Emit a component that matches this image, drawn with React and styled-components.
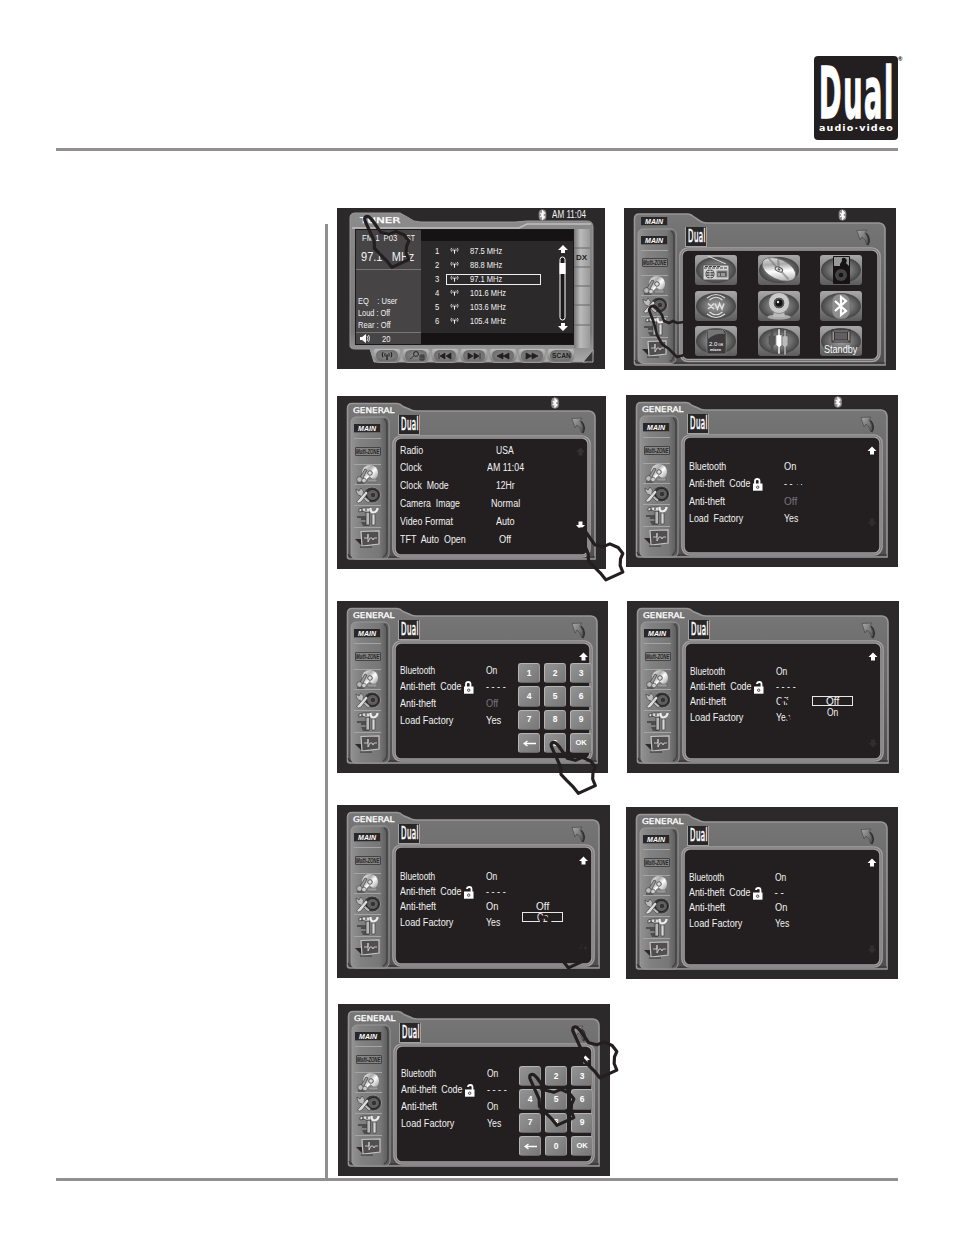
import React, { useLayoutEffect, useRef, useState } from "react";
import styled, { createGlobalStyle } from "styled-components";

const ink = "#231f20";
const rule = "#918f90";

const Global = createGlobalStyle`
  body { margin: 0; background: #fff; font-family: "Liberation Sans", Arial, sans-serif; }
  svg { display: block; }
`;

const Page = styled.div`
  width: 954px; height: 1235px; box-sizing: border-box;
  padding: 56px 0 0 56px; overflow: hidden; position: relative;
`;
const Header = styled.header`
  width: 847px; height: 92px; display: flex; justify-content: flex-end; align-items: flex-start;
`;
const Logo = styled.div`
  width: 84px; height: 84px; border-radius: 4px; background: ${ink}; color: #fff;
  display: flex; flex-direction: column; box-sizing: border-box; padding: 9px 0 0 5px;
`;
const LogoWord = styled.div`
  height: 59px; font: bold 72px/56px "DejaVu Sans Condensed", "DejaVu Sans", sans-serif; letter-spacing: 4px;
  -webkit-text-stroke: 1.5px #fff;
`;
const LogoSub = styled.div`
  font: bold 8.5px/9px "DejaVu Sans", sans-serif; letter-spacing: 1px;
`;
const Reg = styled.span`font: bold 6px/6px "Liberation Sans", sans-serif; width: 5px;`;
const Rule = styled.div`width: 842px; height: 3px; background: ${rule};`;
const Columns = styled.main`
  display: flex; height: 1027px; align-items: flex-start;
`;
const Margin = styled.aside`
  width: 269px; height: 954px; margin-top: 73px; border-right: 3px solid ${rule};
`;
const Stack = styled.div`
  width: 287px; padding: 57px 0 0 ${(p) => p.$pad || 0}px; flex: none; box-sizing: border-box;
`;
const Display = styled.section`
  position: relative; width: ${(p) => p.$w}px; height: ${(p) => p.$h}px;
  margin: ${(p) => p.$mt || 0}px 0 0 ${(p) => p.$ml || 0}px;
  background: #2c292a; color: #f2f2f2; font-size: 10px; z-index: 0;
`;
const Backdrop = styled.svg`position: absolute; inset: 0; z-index: -1;`;
const Overlay = styled.svg`position: absolute; left: 0; top: 0; overflow: visible; z-index: 5; pointer-events: none;`;
const TabBar = styled.div`
  height: 21px; box-sizing: border-box; padding: 9px 0 0 ${(p) => (p.$main ? 17 : 15.5)}px;
  display: flex; justify-content: space-between; align-items: flex-start;
`;
const TabTitle = styled.div`
  font: 7.8px/11px "DejaVu Sans", sans-serif; -webkit-text-stroke: 0.3px #fff; color: #fff;
`;
const Deck = styled.div`display: flex;`;
const Sidebar = styled.nav`
  width: 27px; margin-left: 17px; padding-top: 2px; display: flex; flex-direction: column; flex: none;
`;
const Cell = styled.div`
  height: ${(p) => p.$h}px; box-sizing: border-box; border-bottom: 1px solid ${(p) => (p.$last ? "transparent" : "#a4a4a4")};
  display: flex; align-items: center; justify-content: center;
`;
const MainBadge = styled.div`
  width: 27px; height: 9px; background: #292627; color: #fff; text-align: center; border: solid #666; border-width: 0 1px 1px 0; box-sizing: border-box;
  font: italic bold 7px/9px "Liberation Sans", sans-serif;
`;
const ZoneBadge = styled.div`
  width: 26px; height: 9px; border: 1px solid #444; box-sizing: border-box; color: #242122; background: #858585;
  font: italic bold 6.5px/7px "Liberation Sans", sans-serif; border-radius: 1px;
`;
const Pane = styled.div`flex: 1; padding-left: 17px;`;
const PaneHead = styled.div`
  height: 24px; display: flex; justify-content: space-between; padding-right: ${(p) => p.$r}px;
`;
const MiniLogo = styled.div`
  width: 22px; height: 20px; margin-top: -2px; padding-left: 2px; box-sizing: border-box; background: #292627; border: solid #a2a2a2; border-width: 0 1px 1px 1px;
  font: 17px/18px "DejaVu Sans Condensed", "DejaVu Sans", sans-serif; -webkit-text-stroke: 0.6px #fff; color: #fff; letter-spacing: 1px;
`;
const FitBox = styled.div`width: ${(p) => p.$w}px; flex: none; white-space: pre;`;
const FitText = styled.span`display: inline-block; transform-origin: 0 50%;`;
const Rows = styled.div`padding-top: ${(p) => p.$top}px;`;
const Row = styled.div`
  height: ${(p) => p.$h}px; line-height: 12px; display: flex; align-items: flex-start; padding-left: 2px;
`;
const Label = styled.div`width: ${(p) => p.$w}px; display: flex; flex: none; gap: 2px;`;
const Value = styled.div`
  width: ${(p) => (p.$center ? 40 : 30)}px; display: flex; justify-content: ${(p) => (p.$center ? "center" : "flex-start")};
  color: ${(p) => (p.$dim ? "#77757a" : "#f2f2f2")};
`;
const Float = styled.div`position: absolute; left: ${(p) => p.$x}px; top: ${(p) => p.$y}px;`;
const Keypad = styled.div`display: grid; grid-template-columns: repeat(3, 22px); gap: 3px 4px;`;
const Key = styled.div`
  height: 20.3px; border-radius: 3px; box-sizing: border-box; border: 1px solid #b5b5b5; border-bottom-color: #666; border-right-color: #999;
  background: linear-gradient(135deg, #949494, #777); color: #fff; display: flex; align-items: center; justify-content: center;
  font: bold ${(p) => (p.$small ? 7.5 : 8.5)}px/1 "Liberation Sans", sans-serif;
`;
const Option = styled.div`
  width: 41px; height: ${(p) => (p.$on ? 10 : 12)}px; box-sizing: border-box; border: 1px solid ${(p) => (p.$on ? "#e8e8e8" : "transparent")};
  display: flex; justify-content: center; align-items: center; line-height: 9px; font-size: 10px;
`;
const TileGrid = styled.div`
  display: grid; grid-template-columns: repeat(3, 42px); gap: 5.5px 20.7px; padding: 2px 0 0 10px;
`;
const Tile = styled.div`height: 30px; position: relative;`;
const Standby = styled.div`position: absolute; left: 4px; top: 17px; font-size: 11px; line-height: 12px; color: #fff;`;

const TunerTop = styled.div`height: 22px; display: flex; padding: 7px 0 0 23px; box-sizing: border-box;`;
const TunerBody = styled.div`display: flex; height: 114px; padding-left: 19px;`;
const Info = styled.div`width: 65px; background: #464445; flex: none;`;
const InfoHead = styled.div`height: 40px; padding: 2px 0 0 3.5px; box-sizing: border-box; border-bottom: 1px solid #777;`;
const InfoLine = styled.div`display: flex; line-height: 12px; height: 12.3px; font-size: 8.5px; padding-left: 2px;`;
const InfoMid = styled.div`height: 63px; box-sizing: border-box; padding-top: 24.5px; border-bottom: 1px solid #777;`;
const Volume = styled.div`height: 11px; display: flex; align-items: center; gap: 12px; padding-left: 4px; font-size: 8.5px;`;
const Frequency = styled.div`font-size: 12.5px; line-height: 15px;`;
const Stations = styled.div`width: 152px; background: #2c292a; border: solid #161314; border-width: 11px 0 11px; box-sizing: border-box;`;
const StationList = styled.div`padding-top: 3px;`;
const Station = styled.div`
  height: 14px; display: flex; align-items: center; font-size: 8.5px; padding-left: 14px;
`;
const StationBox = styled.div`
  margin-left: 6px; width: 95px; height: 11px; box-sizing: border-box; border: 1px solid ${(p) => (p.$on ? "#eee" : "transparent")};
  display: flex; align-items: center; padding-left: 3px; gap: 11px;
`;
const SideTab = styled.div`
  width: 17px; color: ${ink}; font: bold 8px/10px "Liberation Sans", sans-serif; padding: 23px 0 0 3px; box-sizing: border-box;
`;
const Buttons = styled.div`display: flex; gap: 1px; padding: 4px 0 0 36px;`;
const Btn = styled.div`
  width: 28px; height: 15px; border-radius: 3px 3px 6px 6px; background: linear-gradient(#bdbdbd, #777); border: 1px solid #999; box-sizing: border-box;
  display: flex; align-items: center; justify-content: center;
`;
const Pill = styled.div`
  width: 22px; height: 11px; border-radius: 6px; background: radial-gradient(#8c8c8c, #626262); color: ${ink};
  display: flex; align-items: center; justify-content: center; font: bold 7px/10px "Liberation Sans", sans-serif;
`;

function Fit({ w, children }) {
  const ref = useRef(null);
  const [s, setS] = useState(1);
  useLayoutEffect(() => { setS(w / ref.current.offsetWidth); }, [w]);
  return <FitBox $w={w}><FitText ref={ref} style={{ transform: `scaleX(${s})` }}>{children}</FitText></FitBox>;
}

const DefsSvg = styled.svg`position: absolute;`;
const Gradients = () => (
  <DefsSvg width="0" height="0">
    <defs>
      <linearGradient id="shell" x2="0" y2="1"><stop stopColor="#777" /><stop offset=".5" stopColor="#686767" /><stop offset="1" stopColor="#504e4f" /></linearGradient>
      <linearGradient id="bar"><stop stopColor="#929292" /><stop offset=".25" stopColor="#818181" /><stop offset=".75" stopColor="#777" /><stop offset="1" stopColor="#555" /></linearGradient>
      <linearGradient id="tile" x2="0" y2="1"><stop stopColor="#a8a8a8" /><stop offset="1" stopColor="#5c5c5c" /></linearGradient>
      <radialGradient id="lens"><stop stopColor="#a5a5a5" /><stop offset=".6" stopColor="#707070" /><stop offset="1" stopColor="#444" /></radialGradient>
      <linearGradient id="disc" x2="1" y2="1"><stop stopColor="#fff" /><stop offset=".35" stopColor="#aaa" /><stop offset=".55" stopColor="#fff" /><stop offset="1" stopColor="#888" /></linearGradient>
      <linearGradient id="tuner" x2="0" y2="1"><stop stopColor="#8c8c8c" /><stop offset=".8" stopColor="#777" /><stop offset="1" stopColor="#aaa" /></linearGradient>
      <linearGradient id="sideTabs"><stop stopColor="#777" /><stop offset=".4" stopColor="#bbb" /><stop offset="1" stopColor="#999" /></linearGradient>
      <linearGradient id="arrow" x2="1" y2="1"><stop stopColor="#aaa" /><stop offset="1" stopColor="#555" /></linearGradient>
    </defs>
  </DefsSvg>
);

const Bluetooth = ({ x, y }) => (
  <g transform={`translate(${x} ${y})`}>
    <rect x="-3.8" y="-5.5" width="7.6" height="11" rx="3.8" fill="#8f8d8e" />
    <path d="M-2.2-2 2 2 0 4V-4L2-2-2.2 2" fill="none" stroke="#fff" strokeWidth="1.2" />
  </g>
);

function Shell({ w, h, blue, main }) {
  const r = w - 11, b = h - 10 + (main ? 5 : 0), t = main ? 6 : 7.5, s = main ? 4 : 0;
  const cb = h - 15 + (main ? 3.5 : 0);
  return (
    <Backdrop width={w} height={h}>
      <path d={`M10.5 ${b - 2}V${t + 5}Q10.5 ${t} 15 ${t}H${60 + s}Q${63 + s} ${t} ${66 + s} ${t + 3}L${72 + s} 13Q${75 + s} 15 ${79 + s} 15H${r - 6}Q${r} 15.5 ${r} 22V${b}H13Q10.5 ${b} 10.5 ${b - 2}Z`} fill="url(#shell)" stroke="#989696" strokeWidth="1.6" />
      <path d={`M11 ${b - 5}Q11 ${b - 2} 15 ${b - 2}H${r}`} fill="none" stroke="#343132" strokeWidth="1" />
      <rect x="14" y="21" width="38" height={cb - 16} rx="5" fill="url(#bar)" stroke="#9a9999" />
      <path d={`M47 23Q50 25 50 30V${cb - 5}Q50 ${cb + 1} 46 ${cb + 3}`} fill="none" stroke="#464445" strokeWidth="1.5" />
      <rect x="57" y="41" width={w - 74} height={cb - 39} rx="7" fill={ink} stroke="#a3a1a2" strokeWidth="3.6" />
      <rect x="57" y="41" width={w - 74} height={cb - 39} rx="7" fill="none" stroke="#686667" strokeWidth=".8" />
      {blue && <Bluetooth x={blue[0]} y={blue[1]} />}
    </Backdrop>
  );
}

const DiscIcon = () => (
  <svg width="25" height="19" viewBox="0 0 25 19">
    <path d="M2 17 11 15 9 19H2Z" fill="#333" opacity=".5" />
    <circle cx="15" cy="8" r="8" fill="url(#disc)" /><circle cx="15" cy="8" r="2.3" fill="#ddd" stroke="#555" /><path d="M11 15.5 14.5 11 19 15.5" fill="#888" />
    <path d="M4 14 10 4 12 5 7 15Z" fill="#999" stroke="#333" strokeWidth=".6" />
    <circle cx="4.5" cy="14.5" r="2.8" fill="#bbb" stroke="#444" strokeWidth=".7" /><circle cx="9" cy="15.5" r="2.3" fill="#ccc" stroke="#444" strokeWidth=".6" />
    <path d="M12 14H22V17H13Z" fill="#999" stroke="#555" strokeWidth=".5" />
  </svg>
);
const SpeakerIcon = () => (
  <svg width="26" height="19" viewBox="0 0 26 19">
    <ellipse cx="17" cy="9" rx="8.6" ry="8" fill="#3a3838" stroke="#999" strokeWidth=".8" /><ellipse cx="17.5" cy="9" rx="6" ry="5.6" fill="#5e5c5d" stroke="#222" /><ellipse cx="18" cy="9" rx="2.8" ry="2.8" fill="#333" stroke="#777" strokeWidth=".7" />
    <path d="M1 3 4 5 6 2Q10 5 8 9L15 15Q14 18 12 16L6 10Q1 9 1 3Z" fill="#bbb" stroke="#333" strokeWidth=".6" />
    <path d="M11 5 13 7 6 16Q3 18 1.500 16Z" fill="#ddd" stroke="#333" strokeWidth=".6" />
  </svg>
);
const ToolsIcon = () => (
  <svg width="25" height="20" viewBox="0 0 25 20">
    <path d="M2 9H12V13H6V11H2ZM6 15H14V19H8Z" fill="#3b393a" opacity=".7" />
    <path d="M11 5H14.500V18H11Z" fill="#b7b7b7" stroke="#333" strokeWidth=".7" />
    <path d="M4 2 8 1H15V5H10L8 4 4 5Z" fill="#ddd" stroke="#333" strokeWidth=".7" />
    <path d="M17 7H20V18H17Z" fill="#d8d8d8" stroke="#444" strokeWidth=".7" />
    <path d="M15.500 1Q15.500 5.500 18.500 5.500 22.500 4.500 22.500 1" fill="none" stroke="#eee" strokeWidth="2.2" />
    <path d="M7 1.500V4.500M11 1.500V4" stroke="#222" />
  </svg>
);
const MonitorIcon = () => (
  <svg width="26" height="18" viewBox="0 0 26 18">
    <path d="M0 9H7V16L4 13Z" fill="#2d2a2b" />
    <path d="M6 1.500 24 .8V14L7 16Z" fill="#504e4f" stroke="#c4c4c4" strokeWidth="1.2" />
    <path d="M9 8H13V4V12L15 8H17L18 10 19 8H22" fill="none" stroke="#ddd" strokeWidth=".8" />
    <path d="M5 17H17" stroke="#333" />
  </svg>
);
const BackIcon = () => (
  <svg width="15" height="17" viewBox="0 0 15 17">
    <path d="M10 4.500Q15.500 10 11.500 16" fill="none" stroke="#333031" strokeWidth="1.8" />
    <path d="M1 1.500 11 1 8.800 4Q13.500 9 10.500 15.500 10 10.500 6 8L4 11Z" fill="url(#arrow)" stroke="#4a4849" strokeWidth=".7" />
  </svg>
);
const Lock = ({ open }) => (
  <svg width="11" height="13" viewBox="0 0 11 13">
    <path d={open ? "M8.5 6V3Q8.500 1 6.500 1 4 1 4 3" : "M3 6V3Q3 1 5.2 1 7.5 1 7.5 3V6"} fill="none" stroke="#fff" strokeWidth="1.8" />
    <rect x="1" y="5.500" width="9.5" height="7.200" fill="#fff" /><circle cx="5.7" cy="9.2" r="1.2" fill="none" stroke={ink} strokeWidth=".8" />
  </svg>
);
const arrowUp = "M0 -4.5 4.5 0H2V3.5H-2V0H-4.5Z";

const handPath = "M-5 17C-12 5-8-2 0-2 6-2 9 4 14 9L40 46 64 52 85 43 110 54 124 72 117 88 116 108 124 128 73 151 56 130 38 112 21 94 20 72Z";
const Hand = ({ x, y }) => (
  <path d={handPath} transform={`translate(${x} ${y}) scale(.3333)`} fill="none" stroke={ink} strokeWidth="9.5" strokeLinejoin="round" />
);

function SourceBar({ short }) {
  const c = short ? 0.6 : 0;
  return (
    <Sidebar>
      <Cell $h={20}><MainBadge>MAIN</MainBadge></Cell>
      <Cell $h={25.5 - c}><ZoneBadge><Fit w={23}>Multi-ZONE</Fit></ZoneBadge></Cell>
      <Cell $h={20.7 - c}><DiscIcon /></Cell>
      <Cell $h={21.3 - c}><SpeakerIcon /></Cell>
      <Cell $h={22 - c}><ToolsIcon /></Cell>
      <Cell $h={22} $last><MonitorIcon /></Cell>
    </Sidebar>
  );
}

const Brand = () => <MiniLogo><Fit w={18}>Dual</Fit></MiniLogo>;

function General({ w, h, mt, ml, blue, top, rows, labelW = 85.5, up = 0, down, arrowX, hands = [], children }) {
  return (
    <Display $w={w} $h={h} $mt={mt} $ml={ml}>
      <Shell w={w} h={h} blue={blue} />
      <TabBar><TabTitle><Fit w={42}>GENERAL</Fit></TabTitle></TabBar>
      <Deck>
        <SourceBar />
        <Pane>
          <PaneHead $r={w - 248.5}><Brand /><BackIcon /></PaneHead>
          <Rows $top={top - 44.3}>
            {rows.map(([label, lw, value, vw, rh, opt = {}]) => (
              <Row key={label} $h={rh}>
                <Label $w={opt.center ? 85 : labelW}><Fit w={lw}>{label}</Fit>{opt.lock && <Lock open={opt.lock === "open"} />}</Label>
                <Value $dim={opt.dim} $center={opt.center}><Fit w={vw}>{value}</Fit></Value>
              </Row>
            ))}
          </Rows>
        </Pane>
      </Deck>
      {children}
      <Overlay width={w} height={h}>
        <path d={arrowUp} transform={`translate(${arrowX} 56)`} fill={up ? "#fff" : "#343132"} />
        {down && <path d={arrowUp} transform={`translate(${arrowX} ${down}) scale(1 -1)`} fill={up ? "#302d2e" : "#fff"} />}
        {hands.map(([x, y]) => <Hand key={x} x={x} y={y} />)}
      </Overlay>
    </Display>
  );
}

const Pad = ({ keys }) => (
  <Keypad>{keys.map((k, i) => (
    <Key key={i} $small={k === "OK"}>
      {k === "<" ? <svg width="13" height="7" viewBox="0 0 13 7"><path d="M13 3.5H2M4.5 1 1 3.5 4.5 6" fill="none" stroke="#fff" strokeWidth="1.3" /></svg> : k}
    </Key>
  ))}</Keypad>
);

const tileArt = [
  <g key="radio"><path d="M13 1 31 9" stroke="#ddd" /><rect x="8" y="10" width="26" height="15" rx="1" fill="#d3d3d3" stroke="#555" /><path d="M9 13H33M10 11.5H26" stroke="#444" strokeWidth="1.2" strokeDasharray="3 1" /><circle cx="15" cy="19" r="4.6" fill="#555" /><path d="M11 19H19M12 16.5H18M12 21.5H18M15 14V24" stroke="#ddd" strokeWidth=".8" /><rect x="22" y="16" width="10" height="6" fill="#555" stroke="#888" /><path d="M24 18V21M27 18V21M29 18V21" stroke="#ddd" /></g>,
  <g key="disc" transform="rotate(25 20 14)"><ellipse cx="21" cy="14" rx="18" ry="10" fill="url(#disc)" stroke="#555" strokeWidth=".6" /><path d="M20 14 7 8M21 14 16 5M22 14 34 19" stroke="#777" strokeWidth="2" opacity=".6" /><ellipse cx="21" cy="14" rx="4" ry="2.2" fill="#ddd" stroke="#555" /><ellipse cx="21" cy="14" rx="1.4" ry="1" fill="#555" /></g>,
  <g key="pod"><rect x="13" y="1" width="17" height="28" rx="1" fill="#161314" /><rect x="14" y="2" width="15" height="9" fill="#999" /><path d="M20 11V9L22 6Q21 2 25 3 28 5 26 8L29 11Z" fill="#161314" /><circle cx="21" cy="20" r="6" fill="#454344" /><circle cx="21" cy="20" r="2.3" fill="#161314" /></g>,
  <g key="xm" fill="none" stroke="#e0e0e0" strokeWidth="1.5"><path d="M12 7Q21 0 30 7M14.500 9Q21 3.500 27.500 9M12 23Q21 30 30 23M14.500 21Q21 26.500 27.500 21" strokeWidth="1.2" /><path d="M13 12.5 19 18M19 12.5 13 18M20 12.5 22.5 18 24.5 12.5 27 18 29 12.5" /></g>,
  <g key="cam"><ellipse cx="21" cy="26" rx="12" ry="3" fill="#aaa" stroke="#555" strokeWidth=".6" /><path d="M16 20H26L27 26H15Z" fill="#bbb" /><circle cx="21" cy="12" r="10.5" fill="#c9c9c9" stroke="#666" strokeWidth=".6" /><circle cx="21" cy="12" r="6" fill="#555" stroke="#ddd" /><circle cx="21" cy="12" r="3.5" fill="#111" /><circle cx="20" cy="11" r="1.2" fill="#eee" /></g>,
  <g key="bt"><rect x="12" y="3" width="18" height="25" rx="8" fill="#8f8f8f" stroke="#666" strokeWidth=".5" /><path d="M15 10 26 20 21 24V6L26 10 15 20" fill="none" stroke="#fff" strokeWidth="2.2" /></g>,
  <g key="sd"><path d="M13 3H28L31 6V28H12V5Z" fill="#3c3a3b" stroke="#999" strokeWidth=".5" /><path d="M13 4H28L30 8Q20 7 13 13Z" fill="#757575" /><text x="14" y="20" fontSize="6" fill="#fff">2.0</text><text x="23" y="20" fontSize="3.5" fill="#fff">GB</text><text x="15" y="25" fontSize="4" fontWeight="bold" fill="#fff">micro</text></g>,
  <g key="av" stroke="#4b4b4b" strokeWidth=".5"><path d="M13 5H15V10H17V18L15 20V27H13V20L11 18V10H13Z" fill="#555" /><path d="M20 3H22V9H24V19L22 21V28H20V21L18 19V9H20Z" fill="#fff" /><path d="M26 4H28V10H30V19L28 21V29H26V21L24 19V10H26Z" fill="#bbb" /></g>,
  <g key="st"><rect x="12" y="4" width="18" height="12" fill="#999" stroke="#343132" /><rect x="14.5" y="6" width="13" height="8" fill="#606060" stroke="#343132" /><path d="M12 4 14.5 6M30 4 27.5 6M12 16 14.5 14M30 16 27.5 14" stroke="#343132" /></g>,
];

function MainMenu() {
  return (
    <Display $w={272} $h={162}>
      <Shell w={272} h={162} main blue={[218.5, 7]} />
      <TabBar $main><MainBadge>MAIN</MainBadge></TabBar>
      <Deck>
        <SourceBar short />
        <Pane>
          <PaneHead $r={25}><Brand /><BackIcon /></PaneHead>
          <TileGrid>
            {tileArt.map((art, i) => (
              <Tile key={i}>
                <svg width="42" height="30"><rect width="42" height="30" rx="3" fill="url(#tile)" /><ellipse cx="21" cy="15" rx="20" ry="13" fill="url(#lens)" />{art}</svg>
                {i === 8 && <Standby><Fit w={33}>Standby</Fit></Standby>}
              </Tile>
            ))}
          </TileGrid>
        </Pane>
      </Deck>
      <Overlay width="272" height="162">
        <path d="M60 114 53 115 49 113 45 115 40 113 38 107 33 100Q27 95 25 102L30 115 33 127 38 136 45 141 53 149 60 147" fill="none" stroke={ink} strokeWidth="2.6" />
      </Overlay>
    </Display>
  );
}

const Antenna = ({ size = 9 }) => (
  <svg width={size} height={size * 0.8} viewBox="0 0 10 8"><path d="M1.800 1Q.3 3 1.800 5.200M3.600 1.800Q2.800 3.100 3.600 4.500M8.200 1Q9.700 3 8.200 5.200M6.400 1.800Q7.200 3.100 6.400 4.500" fill="none" stroke="currentColor" strokeWidth=".9" /><path d="M5 3V7.500" stroke="currentColor" strokeWidth="1.2" /></svg>
);
const playPaths = { prev: "M2 1V7M8 1V7L3 4ZM14 1V7L9 4Z", next: "M2 1V7L7 4ZM8 1V7L13 4ZM14 1V7", rew: "M8 1V7L2 4ZM14 1V7L8 4Z", ff: "M2 1V7L8 4ZM8 1V7L14 4Z" };
const stations = [["87.5 MHz", 32], ["88.8 MHz", 32], ["97.1 MHz", 32], ["101.6 MHz", 36], ["103.6 MHz", 36], ["105.4 MHz", 36]];

function Tuner() {
  return (
    <Display $w={268} $h={161}>
      <Backdrop width="268" height="161">
        <path d="M13 138V10Q13 5 18 5H63L72 10Q76 14 84 14H178L190 13H250Q256 13 256 19V146L249 154H37L33 141H18Q13 141 13 138Z" fill="url(#tuner)" stroke="#999" />
        <path d="M15 20H182L190 16H254" fill="none" stroke="#c0c0c0" strokeWidth="1.4" />
        <rect x="18" y="21" width="219" height="116" fill="#1b1819" />
        <rect x="237" y="21" width="16" height="119" fill="url(#sideTabs)" />
        <path d="M237 40H253M237 59H253M237 78H253M237 97H253M237 117H253" stroke="#666" />
        <path d="M246 154 256 142V154Z" fill="#383637" stroke="#aaa" />
        <Bluetooth x={205.5} y={7} />
      </Backdrop>
      <TunerTop>
        <TabTitle><Fit w={41}>TUNER</Fit></TabTitle>
        <Float $x={215} $y={1}><Fit w={34}>AM 11:04</Fit></Float>
      </TunerTop>
      <TunerBody>
        <Info>
          <InfoHead>
            <InfoLine><Fit w={35}>FM 1  P03</Fit><FitBox $w={9} /><Fit w={9}>ST</Fit></InfoLine>
            <Float $x={24} $y={42}><Frequency><Fit w={53}>97.1   MHz</Fit></Frequency></Float>
          </InfoHead>
          <InfoMid>
            <InfoLine><Fit w={39}>EQ    : User</Fit></InfoLine>
            <InfoLine><Fit w={32}>Loud : Off</Fit></InfoLine>
            <InfoLine><Fit w={33}>Rear : Off</Fit></InfoLine>
          </InfoMid>
          <Volume>
            <svg width="10" height="9" viewBox="0 0 10 9"><path d="M0 3H2L6 0V9L2 6H0Z" fill="#fff" /><path d="M7 2Q9 4.5 7 7M8.5 1Q11 4.5 8.5 8" fill="none" stroke="#fff" strokeWidth=".8" /></svg>
            <Fit w={8}>20</Fit>
          </Volume>
        </Info>
        <Stations>
          <StationList>
            {stations.map(([name, w], i) => (
              <Station key={name}><Fit w={4.5}>{i + 1}</Fit><StationBox $on={i === 2}><Antenna /><Fit w={w}>{name}</Fit></StationBox></Station>
            ))}
          </StationList>
        </Stations>
        <SideTab><Fit w={11}>DX</Fit></SideTab>
      </TunerBody>
      <Buttons>
        <Btn><Pill><Antenna size={12} /></Pill></Btn>
        <Btn><Pill><svg width="17" height="10" viewBox="0 0 17 10"><circle cx="8" cy="3" r="2.4" fill="none" stroke={ink} /><path d="M6 5 2 8M12 4H16V9H12ZM12 6H16M14 4V9" stroke={ink} fill="none" strokeWidth=".7" /></svg></Pill></Btn>
        {Object.keys(playPaths).map((k) => (
          <Btn key={k}><Pill><svg width="16" height="8"><path d={playPaths[k]} fill={ink} stroke={ink} strokeWidth=".8" /></svg></Pill></Btn>
        ))}
        <Btn><Pill><Fit w={19}>SCAN</Fit></Pill></Btn>
      </Buttons>
      <Overlay width="268" height="161">
        <path d="M226 37 231 42H228V45H224V42H221Z" fill="#fff" />
        <path d="M226 123 231 118H228V115H224V118H221Z" fill="#fff" />
        <rect x="223" y="49" width="5" height="63" rx="2.5" fill="#1b1819" stroke="#fff" />
        <rect x="222.5" y="55" width="6" height="11" fill="#fff" />
        <Hand x={30.5} y={9} />
      </Overlay>
    </Display>
  );
}

const code = (value, h, lock, vw = 20) => ["Anti-theft  Code", 61, value, vw, h, { lock }];

export default function App() {
  return (
    <Page>
      <Global />
      <Gradients />
      <Header>
        <Logo>
          <LogoWord><Fit w={76}>Dual</Fit></LogoWord>
          <LogoSub><Fit w={75}>audio·video</Fit></LogoSub>
        </Logo>
        <Reg>®</Reg>
      </Header>
      <Rule />
      <Columns>
        <Margin />
        <Stack $pad={9}>
          <Tuner />
          <General w={269} h={173} mt={27} blue={[218, 7]} top={48} arrowX={243.5} down={129} hands={[[244.5, 133.5]]}
            rows={[
              ["Radio", 23, "USA", 18, 17.8, { center: 1 }], ["Clock", 22, "AM 11:04", 37, 17.8, { center: 1 }],
              ["Clock  Mode", 49, "12Hr", 19, 17.8, { center: 1 }], ["Camera  Image", 60, "Normal", 29, 17.8, { center: 1 }],
              ["Video Format", 53, "Auto", 19, 17.8, { center: 1 }], ["TFT  Auto  Open", 66, "Off", 12, 12, { center: 1 }],
            ]} />
          <General w={271} h={172} mt={32} top={63} arrowX={246.5} up={1} hands={[[217, 142]]}
            rows={[["Bluetooth", 35, "On", 11, 16], code("- - - -", 17.5, "closed"), ["Anti-theft", 36, "Off", 12, 17, { dim: 1 }], ["Load Factory", 53, "Yes", 15, 12]]}>
            <Float $x={181} $y={62}><Pad keys={[1, 2, 3, 4, 5, 6, 7, 8, 9, "<", 0, "OK"]} /></Float>
          </General>
          <General w={273} h={173} mt={32} top={65} arrowX={246.5} up={1} down={142} hands={[[207, 112.5]]}
            rows={[["Bluetooth", 35, "On", 11, 15.4], code("- - - -", 15.4, "open"), ["Anti-theft", 36, "On", 12, 15.4], ["Load Factory", 53, "Yes", 14, 12]]}>
            <Float $x={185} $y={95}><Option><Fit w={13}>Off</Fit></Option><Option $on><Fit w={11}>On</Fit></Option></Float>
          </General>
          <General w={272} h={172} mt={26} ml={1} top={63} arrowX={247.5} up={1} hands={[[194.5, 71], [237.5, 23.5]]}
            rows={[["Bluetooth", 35, "On", 11, 16], code("- - - -", 17.5, "open"), ["Anti-theft", 36, "On", 11, 17], ["Load Factory", 53, "Yes", 14, 12]]}>
            <Float $x={181} $y={62}><Pad keys={["", 2, 3, 4, 5, 6, 7, 8, 9, "<", 0, "OK"]} /></Float>
          </General>
        </Stack>
        <Stack $pad={9}>
          <MainMenu />
          <General w={272} h={172} mt={25} ml={2} blue={[212, 7]} top={65} labelW={95} arrowX={246} up={1} down={127} hands={[[171, 83]]}
            rows={[["Bluetooth", 37, "On", 12, 17.6], code("- - - -", 17.6, "closed"), ["Anti-theft", 36, "Off", 13, 17.6, { dim: 1 }], ["Load  Factory", 54, "Yes", 14, 12]]} />
          <General w={272} h={172} mt={34} ml={3} top={64} arrowX={246} up={1} down={142} hands={[[157, 99]]}
            rows={[["Bluetooth", 35, "On", 11, 15.4], code("- - - -", 15.4, "open"), ["Anti-theft", 36, "Off", 12, 15.4], ["Load Factory", 53, "Yes", 14, 12]]}>
            <Float $x={185} $y={95}><Option $on><Fit w={13}>Off</Fit></Option><Option><Fit w={11}>On</Fit></Option></Float>
          </General>
          <General w={272} h={172} mt={34} ml={2} top={64} arrowX={246} up={1} down={142}
            rows={[["Bluetooth", 35, "On", 11, 15.4], code("- -", 15.4, "open", 9), ["Anti-theft", 36, "On", 12, 15.4], ["Load Factory", 53, "Yes", 14, 12]]} />
        </Stack>
      </Columns>
      <Rule />
    </Page>
  );
}
